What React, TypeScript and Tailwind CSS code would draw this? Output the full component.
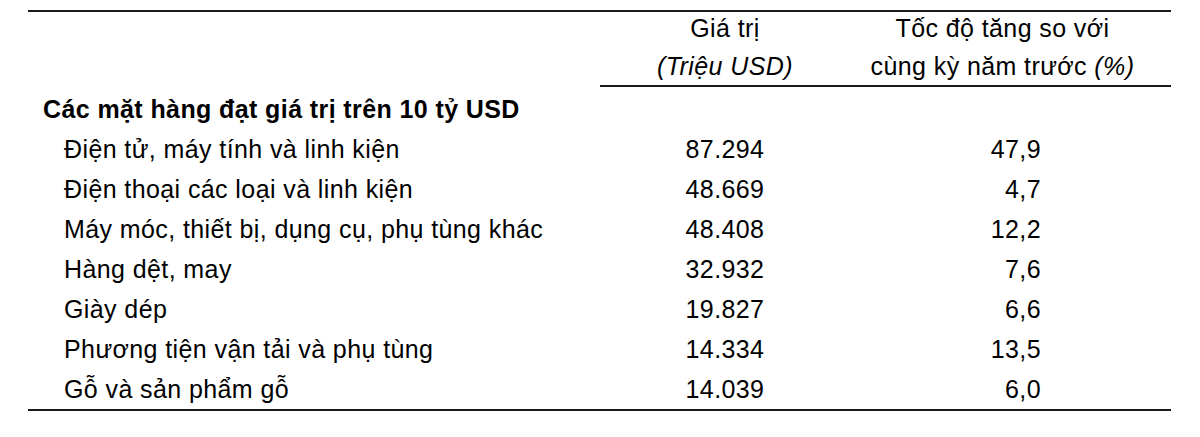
import React from 'react';

// Kim ngạch xuất khẩu: các mặt hàng đạt trên 10 tỷ USD
const items: [string, string, string][] = [
  ['Điện tử, máy tính và linh kiện', '87.294', '47,9'],
  ['Điện thoại các loại và linh kiện', '48.669', '4,7'],
  ['Máy móc, thiết bị, dụng cụ, phụ tùng khác', '48.408', '12,2'],
  ['Hàng dệt, may', '32.932', '7,6'],
  ['Giày dép', '19.827', '6,6'],
  ['Phương tiện vận tải và phụ tùng', '14.334', '13,5'],
  ['Gỗ và sản phẩm gỗ', '14.039', '6,0'],
];

export default function App() {
  return (
    <div className="w-[1200px] h-[437px] bg-white pt-[10px] pl-[28px] font-['Liberation_Sans',Arial,sans-serif] text-[25px] tracking-[0.4px] text-black">
      <div className="w-[1143px] border-y-2 border-[#1a1a1a]">
        {/* header */}
        <div className="grid grid-cols-[572px_1fr]">
          <div />
          <div className="border-b-2 border-[#1a1a1a] pt-[3px] pb-[6px] grid grid-cols-[250px_305px]">
            <div className="flex flex-col items-center gap-[12px] leading-[26px]">
              <span>Giá trị</span>
              <span className="italic">(Triệu USD)</span>
            </div>
            <div className="flex flex-col items-center gap-[12px] leading-[26px]">
              <span>Tốc độ tăng so với</span>
              <span>
                cùng kỳ năm trước <span className="italic">(%)</span>
              </span>
            </div>
          </div>
        </div>

        {/* body */}
        <div className="mt-[2px] leading-[40px]">
          <div className="pl-[15px] font-bold">Các mặt hàng đạt giá trị trên 10 tỷ USD</div>
          {items.map(([name, value, growth]) => (
            <div key={name} className="grid grid-cols-[572px_250px_305px]">
              <div className="pl-[36px]">{name}</div>
              <div className="text-center">{value}</div>
              <div className="text-right pr-[114px]">{growth}</div>
            </div>
          ))}
        </div>
      </div>
    </div>
  );
}
